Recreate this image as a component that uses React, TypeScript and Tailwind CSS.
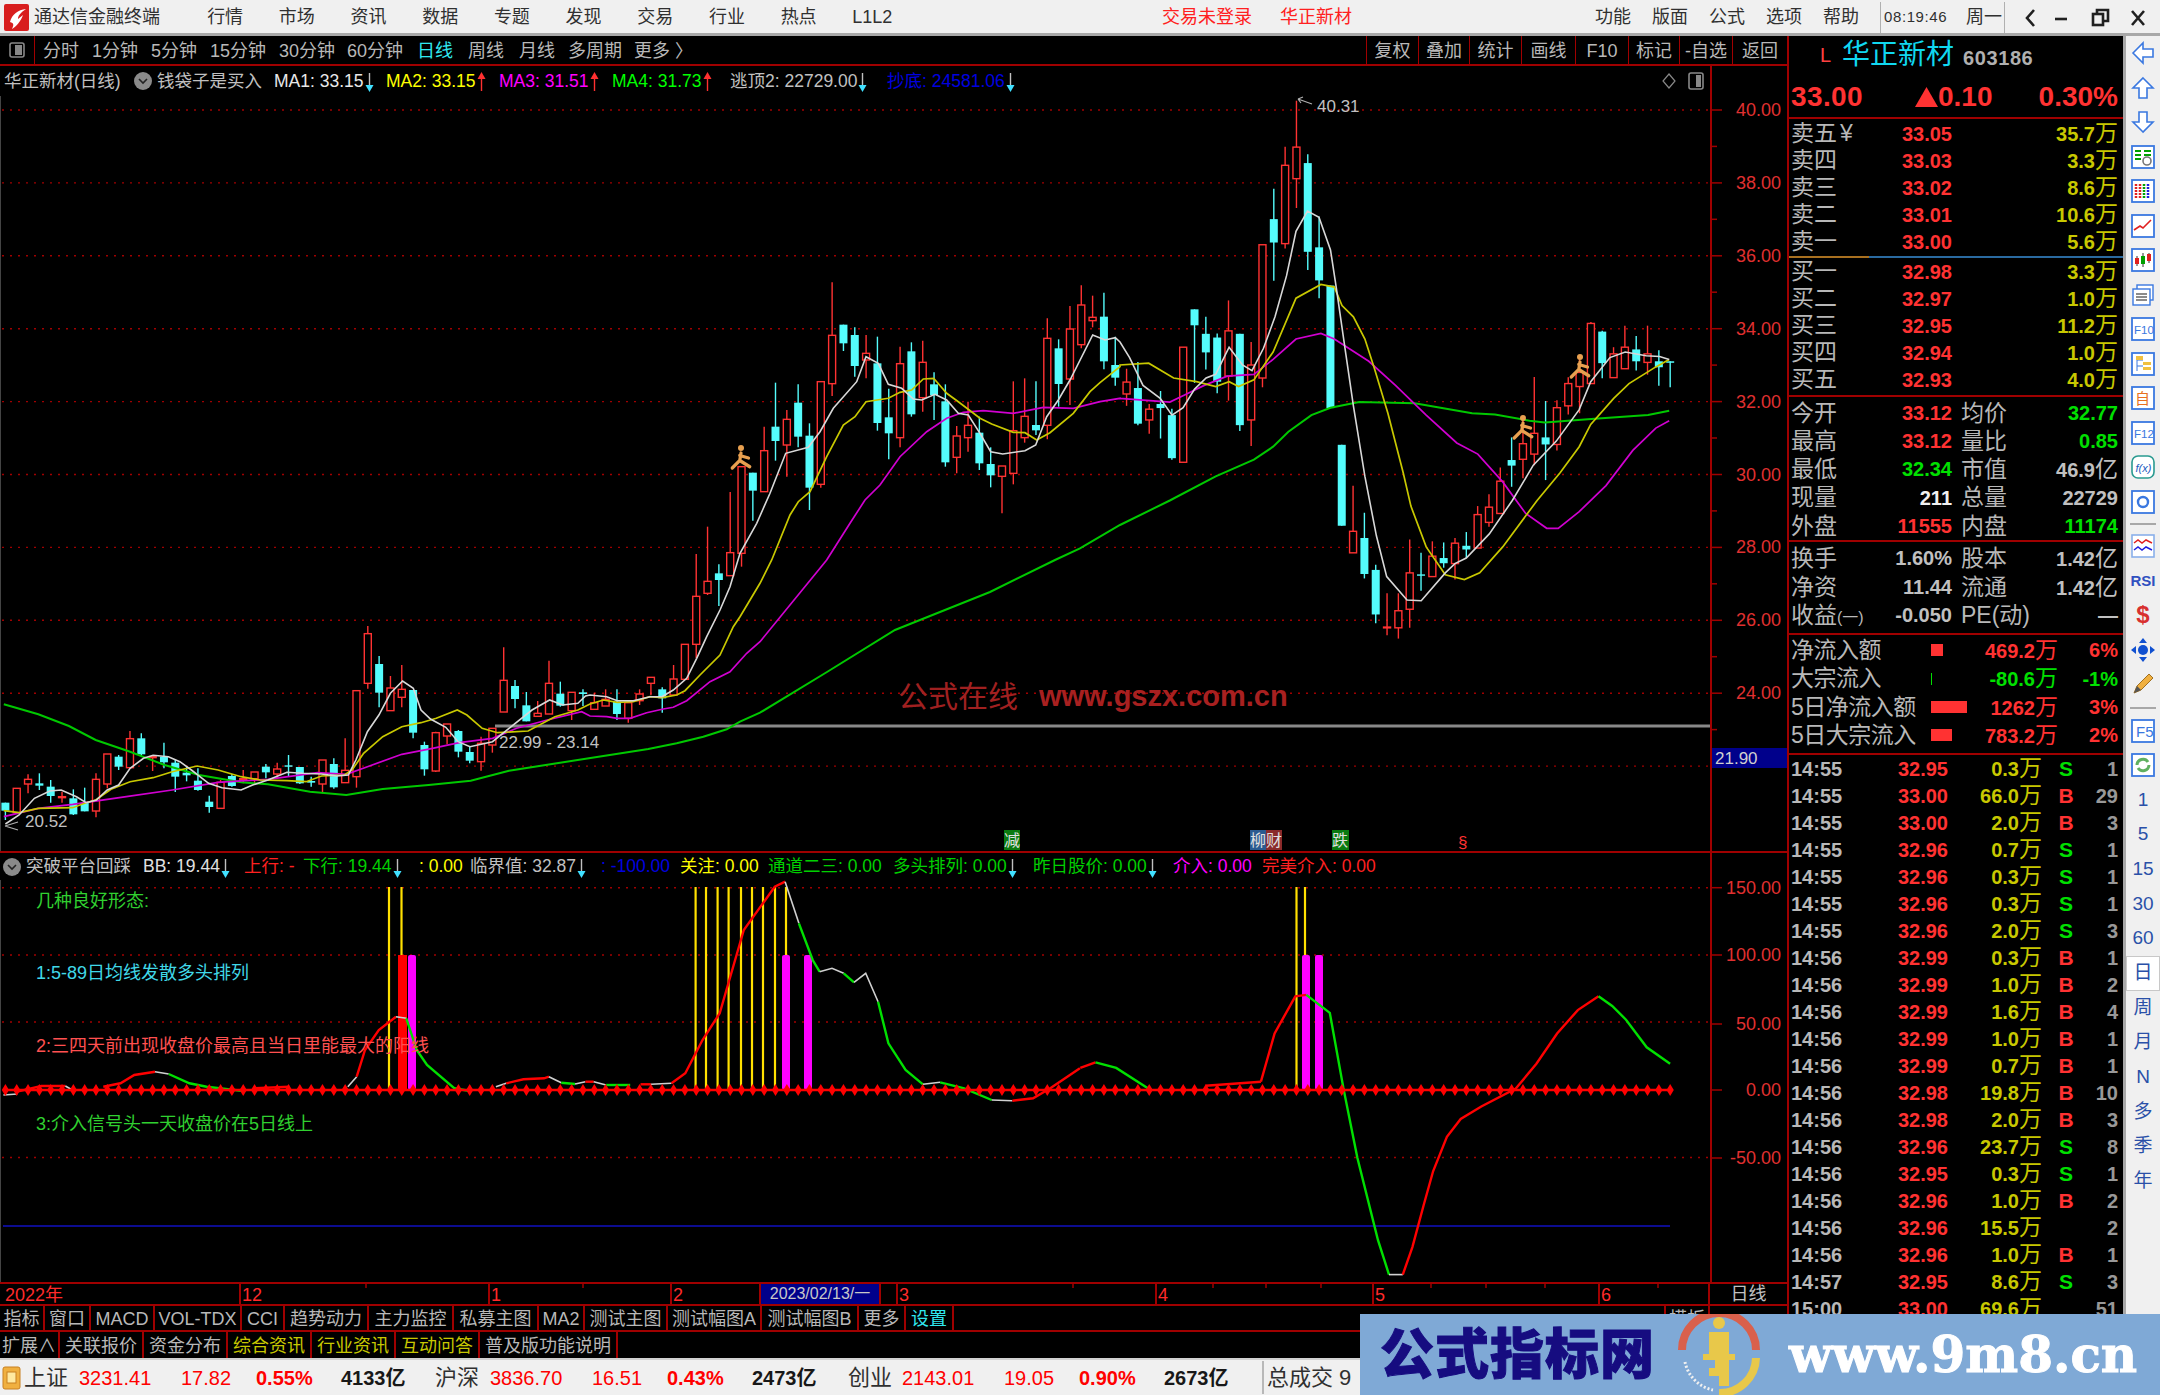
import type { ReactNode } from 'react'

// zoomed reference crops -> page pixels
type Region = [number, number, number, number]
const A: Region = [0, 2.613, 620, 3]
const B: Region = [600, 3, 240, 3]
const C: Region = [1120, 2.613, 79.19, 2.694]
const D: Region = [590, 3, 530, 3]
const E: Region = [0, 1.452, 820, 3]
const F: Region = [0, 0.7257, 0, 0.7257]

const px = (r: Region, x: number) => r[0] + x / r[1]
const py = (r: Region, y: number) => r[2] + y / r[3]
const pts = (r: Region, flat: number[]) => {
  let out = ''
  for (let i = 0; i < flat.length; i += 2) out += `${px(r, flat[i]).toFixed(1)},${py(r, flat[i + 1]).toFixed(1)} `
  return out
}

// up, bodyTop, bodyBottom, wickTop, wickBottom
const candlesA = [
  [0,548,572,548,600],[1,505,578,505,578],[1,478,492,463,520],[0,490,497,460,510],[0,500,528,480,548],[1,530,533,515,548],[0,535,583,508,585],[0,548,574,503,574],[1,478,573,460,592],[1,402,492,402,505],
  [0,410,440,405,450],[1,356,443,333,445],[0,355,403,340,408],[1,410,413,405,453],[0,410,427,368,445],[0,428,470,420,516],[0,458,466,440,484],[0,482,510,445,512],[0,545,561,527,578],[1,487,565,480,565],
  [0,468,498,462,500],[1,476,480,450,490],[1,456,476,456,495],[0,440,457,432,475],[1,447,462,428,475],[0,436,439,405,470],[0,441,490,441,492],[0,483,488,470,500],[1,420,492,420,520],[0,432,502,415,506],
  [1,451,488,355,488],[1,212,470,212,503],[1,41,190,18,206],[0,132,218,108,262],[1,204,272,168,272],[1,208,232,135,262],[0,210,338,210,355],[0,375,448,365,467],[1,338,453,335,456],[1,312,348,312,373],
  [0,333,395,330,412],[0,396,422,378,430],[1,370,425,350,452],[1,325,375,325,398],[1,181,276,82,276],[0,198,237,180,265],[0,256,304,216,304],[1,280,289,243,289],[1,190,282,122,282],[0,221,257,185,260],
  [1,217,272,217,300],[0,217,222,208,258],
]
const candlesD = [
  [1,518,538,488,538],[1,508,528,478,528],[0,515,552,478,570],[1,518,565,510,578],[1,492,512,478,525],[1,442,460,442,495],[0,478,505,472,548],[1,447,495,405,495],[1,343,448,343,448],[1,199,343,72,385],
  [1,154,190,-10,195],[0,130,150,103,228],[1,68,137,-114,137],
]
const candlesB = [
  [1,680,940,680,980],[0,698,752,698,842],[1,632,755,560,755],[0,560,603,428,662],[1,538,615,510,710],[0,488,590,433,622],[0,587,743,550,810],[1,425,733,425,743],[1,286,431,127,468],[0,254,310,254,333],
  [0,285,378,262,410],[1,340,360,285,415],[0,370,549,290,572],[0,532,580,446,658],[1,371,593,320,622],[0,334,523,307,530],[1,367,473,302,515],[0,433,465,397,540],[0,484,667,433,680],[1,588,652,558,700],
  [1,556,593,485,635],[0,578,670,530,690],[0,672,706,622,742],[1,678,709,678,820],[1,572,700,424,733],[1,529,593,415,608],[0,555,571,424,585],[1,295,556,235,598],[0,325,432,298,500],[1,267,417,198,495],
  [1,195,314,136,325],[1,232,242,167,262],[0,230,364,158,388],[0,375,413,290,437],
]
const candlesC = [
  [1,816,848,780,880],[0,832,928,762,932],[1,889,918,875,955],[0,875,886,840,968],[0,905,1021,888,1025],[1,722,1032,722,1032],[0,620,663,620,818],[0,686,736,640,782],[0,696,815,685,846],[1,678,800,596,866],
  [0,686,932,686,948],[1,770,918,708,988],[1,446,805,446,830],[0,377,440,295,543],[1,232,443,182,456],[1,183,268,58,347],[0,226,465,202,514],[0,453,542,370,590],[0,556,886,556,886],[0,985,1203,985,1203],
  [1,1218,1276,1095,1276],[0,1236,1333,1168,1345],[0,1322,1442,1308,1466],[1,1476,1478,1385,1498],[1,1432,1478,1385,1507],[1,1330,1428,1240,1478],[0,1334,1337,1276,1378],[1,1285,1340,1245,1340],[0,1290,1304,1248,1316],[1,1250,1305,1236,1348],
  [0,1257,1267,1220,1290],[1,1173,1263,1150,1263],[1,1153,1194,1118,1206],[1,1083,1170,1046,1170],[0,1026,1041,965,1098],[1,982,1024,915,1075],[1,954,1010,802,1040],[0,965,984,867,1080],[1,885,984,865,1000],[1,820,880,803,903],
  [1,790,828,745,900],[1,658,820,654,820],[0,680,765,678,806],[1,740,804,722,804],[1,722,780,664,780],[0,728,760,692,785],[1,740,763,664,796],[0,760,776,730,826],[0,760,764,760,830],
]

const candleX = (i: number) => 5.4 + 11.325 * i
const allCandles = [
  ...candlesA.map((c) => ({ c, r: A })),
  ...candlesD.map((c) => ({ c, r: D })),
  ...candlesB.map((c) => ({ c, r: B })),
  ...candlesC.map((c) => ({ c, r: C })),
]

const ma1 =
  pts(A, [14,612,50,585,90,535,130,513,160,510,200,530,225,548,252,540,280,510,310,495,340,445,375,415,400,406,440,410,470,425,500,450,545,490,580,503,630,510,660,495,700,480,750,457,790,460,840,462,880,468,910,465,930,420,960,335,990,285,1020,220,1052,183,1080,205,1100,270,1125,297,1165,322,1197,365,1228,380,1287,365,1330,325,1390,270,1436,240,1470,255,1510,250,1530,228]) +
  pts(D, [0,495,50,500,82,512,130,512,180,500,216,500,250,480,290,445,320,385,350,320,390,240,420,170,450,70]) +
  pts(B, [470,850,510,760,557,640,625,622,660,575,700,505,770,425,798,350,835,370,865,433,905,445,940,477,965,480,1005,463,1040,480,1075,520,1105,525,1140,580,1172,635,1208,642,1275,632,1307,615,1340,530,1375,480,1410,420,1478,285,1515,300,1546,293]) +
  pts(C, [0,708,25,750,60,825,105,860,136,905,165,885,195,835,225,805,250,795,285,722,320,770,345,785,375,725,405,640,435,530,460,410,490,355,520,372,550,460,565,560,590,740,610,880,640,1070,670,1230,697,1340,750,1403,787,1405,850,1330,875,1305,905,1290,965,1225,1025,1135,1080,1040,1140,975,1200,890,1230,815,1280,750,1320,735,1375,745,1410,747,1435,755])

const ma2 =
  pts(A, [10,572,50,578,100,565,190,563,225,548,250,540,290,508,340,485,400,473,450,455,515,438,570,450,630,470,680,480,750,482,800,485,840,468,900,465,920,450,950,400,1000,350,1050,320,1100,308,1140,295,1195,270,1220,285,1260,325,1300,338,1380,333,1450,290,1510,270]) +
  pts(D, [0,522,40,510,82,517,130,515,180,500,216,503,260,495,285,482,330,435,390,375,430,290,450,260,510,160]) +
  pts(B, [515,960,570,825,595,785,630,755,680,650,730,555,765,530,798,485,865,475,900,457,935,450,970,417,1001,415,1040,460,1075,485,1140,535,1175,552,1240,577,1275,578,1310,600,1350,578,1420,520,1470,455,1500,428,1560,380]) +
  pts(C, [0,770,75,765,140,805,200,815,250,828,285,815,310,828,350,810,400,735,460,590,525,553,560,560,580,610,610,640,640,700,665,780,700,900,740,1060,760,1150,800,1260,850,1335,900,1348,940,1330,1000,1260,1090,1135,1150,1060,1200,990,1230,930,1290,860,1330,820,1400,775,1435,755])

const ma3 =
  pts(A, [10,590,100,565,190,553,330,530,450,510,570,487,640,482,700,478,830,458,905,463,960,440,1050,403,1130,385,1200,368,1287,355,1350,325,1430,300,1520,275]) +
  pts(D, [0,558,50,560,82,565,120,565,170,548,220,537,250,532,290,512,360,455,420,425,470,370,510,335]) +
  pts(B, [680,960,750,850,795,780,840,735,900,650,980,575,1040,535,1090,517,1150,512,1240,520,1330,502,1420,505,1500,485,1560,475]) +
  pts(C, [0,860,130,870,170,850,220,825,280,800,350,795,400,755,460,700,525,685,560,700,650,760,720,825,800,905,880,980,935,1010,1000,1085,1060,1170,1115,1210,1145,1210,1200,1165,1270,1095,1340,1000,1400,940,1435,920])

const ma4 =
  pts(A, [10,253,100,283,180,318,250,360,340,395,430,435,520,465,630,487,700,493,810,515,905,525,1000,507,1120,495,1230,482,1330,452]) +
  pts(D, [175,657,260,640,340,620,410,598,450,575,510,548]) +
  '827,672 895,630 990,592 ' +
  pts(B, [1365,960,1440,925,1560,855]) +
  pts(C, [130,1135,250,1070,350,1025,400,990,440,950,500,905,550,885,625,870,770,873,920,900,980,903,1070,920,1110,925,1240,915,1380,905,1435,893])

// indicator curve, one polyline per colour run
const RED = '#ff0000'
const GRN = '#00e000'
const WHT = '#d0d0d0'
const curve: [string, Region, number[]][] = [
  [WHT, E, [5,825,25,822]],
  [RED, E, [25,815,60,798,95,798]],
  [WHT, E, [95,798,105,810]],
  [RED, E, [150,800,175,790,195,765,225,755]],
  [WHT, E, [225,755,245,762]],
  [GRN, E, [245,762,275,790,300,800,350,812]],
  [RED, E, [370,805,420,800]],
  [WHT, E, [505,800,518,770]],
  [RED, E, [518,770,530,690,550,630,575,590]],
  [WHT, E, [575,590,590,595]],
  [GRN, E, [590,595,605,690,620,735,660,805,680,812]],
  [WHT, E, [720,800,735,790]],
  [RED, E, [735,790,760,778,790,775,797,770]],
  [WHT, E, [797,770,815,788]],
  [GRN, E, [815,788,835,792]],
  [WHT, E, [835,792,850,785]],
  [RED, E, [850,785,862,785]],
  [WHT, E, [862,785,880,795]],
  [GRN, E, [880,795,915,795]],
  [RED, E, [930,793,945,793]],
  [WHT, E, [945,793,975,790]],
  [RED, E, [975,790,995,760,1020,660,1045,580,1080,330,1125,200,1140,185]],
  [WHT, E, [1140,185,1160,310]],
  [GRN, E, [1160,310,1180,420,1190,455]],
  [WHT, E, [1190,455,1208,445,1225,460]],
  [GRN, E, [1225,460,1240,487]],
  [WHT, E, [1240,487,1257,460,1275,545]],
  [GRN, E, [1275,545,1290,670,1315,750,1340,793]],
  [WHT, E, [1340,793,1365,787]],
  [GRN, E, [1365,787,1400,805,1440,840]],
  [WHT, E, [1440,840,1470,842]],
  [RED, E, [1470,842,1500,835,1525,805,1568,745]],
  [RED, F, [784,775,795,771]],
  [GRN, F, [795,771,810,775,835,791]],
  [RED, F, [875,788,915,785]],
  [RED, F, [915,785,925,750,940,723,948,722]],
  [GRN, F, [948,722,965,735,975,790,985,840,1000,900,1008,925]],
  [WHT, F, [1008,925,1018,925]],
  [RED, F, [1018,925,1025,905,1033,875,1040,850,1050,825,1060,812,1075,803,1100,790,1115,772,1130,750,1145,733,1160,723]],
  [GRN, F, [1160,723,1170,730,1180,740,1195,760,1212,772]],
]

const yellowBars = [389, 401.5, 695.6, 706, 717.6, 728.6, 741, 752, 763, 775, 786, 1296.5, 1305]
const pinkBars = [412, 786, 808, 1306, 1319]

const priceTicks = [40, 38, 36, 34, 32, 30, 28, 26, 24]
const priceY = (p: number) => 110 + (40 - p) * 36.45
const indY = [887.7, 955, 1022, 1157.5]
const indLabels: [string, number][] = [['150.00', 887.7], ['100.00', 955], ['50.00', 1024], ['0.00', 1090], ['-50.00', 1158]]
const axisTicks = [366, 583, 1073, 1213, 1266, 1321, 1431, 1486, 1545, 1658]

const DARK = '#a00000'

function Runner({ x, y }: { x: number; y: number }) {
  return (
    <g transform={`translate(${x} ${y}) scale(1.25)`} stroke="#e8a050" fill="none" strokeWidth="2.6" strokeLinecap="round">
      <circle cx="0" cy="-8" r="2.4" fill="#e8a050" strokeWidth="0" />
      <path d="M0 -4 L-1 2 L-7 8 M-1 2 L7 7 M-1 -2 L6 0" />
    </g>
  )
}

function MainChart() {
  return (
    <svg width="1787" height="755" viewBox="0 96 1787 755" className="block shrink-0">
      <line x1="0.5" x2="0.5" y1="96" y2="851" stroke="#444" />
      {[...priceTicks, 22].map((p) => (
        <line key={p} x1="2" x2="1711" y1={priceY(p)} y2={priceY(p)} stroke={DARK} strokeWidth="1.4" strokeDasharray="2 6" />
      ))}
      <line x1="495" x2="1711" y1="726" y2="726" stroke="#888" strokeWidth="3" />
      {allCandles.map(({ c, r }, i) => {
        const x = candleX(i)
        const col = c[0] ? '#ff3232' : '#54fcfc'
        const top = py(r, c[1])
        const bot = py(r, c[2])
        return (
          <g key={i}>
            <line x1={x} x2={x} y1={py(r, c[3])} y2={py(r, c[4])} stroke={col} strokeWidth="1.4" />
            {c[0] ? (
              <rect x={x - 3.5} y={top} width="7" height={Math.max(bot - top, 0.8)} fill="#000" stroke={col} strokeWidth="1.4" />
            ) : (
              <rect x={x - 4} y={top} width="8" height={Math.max(bot - top, 1.4)} fill={col} />
            )}
          </g>
        )
      })}
      <polyline points={ma4} fill="none" stroke="#00c800" strokeWidth="2" />
      <polyline points={ma3} fill="none" stroke="#d000d0" strokeWidth="1.7" />
      <polyline points={ma2} fill="none" stroke="#c8c800" strokeWidth="1.7" />
      <polyline points={ma1} fill="none" stroke="#d8d8d8" strokeWidth="1.6" />
      <Runner x={741} y={458} />
      <Runner x={1523} y={428} />
      <Runner x={1580} y={367} />

      <path d="M1298 99 L1312 104 M1298 99 L1303 97 M1298 99 L1301 103" stroke="#b0b0b0" fill="none" strokeWidth="1.2" />
      <text x="1317" y="112" fontSize="17" fill="#c0c0c0">40.31</text>
      <text x="499" y="748" fontSize="17" fill="#c0c0c0">22.99 - 23.14</text>
      <path d="M5 826 L18 822 M5 826 L18 830" stroke="#b0b0b0" fill="none" strokeWidth="1.2" />
      <text x="25" y="827" fontSize="17" fill="#c0c0c0">20.52</text>

      <text x="898" y="707" fontSize="30" fill="#a02020">公式在线</text>
      <text x="1039" y="706" fontSize="29" fill="#a82020" fontWeight="700">www.gszx.com.cn</text>

      <rect x="1004" y="830" width="16" height="20" fill="#0a7a10" />
      <text x="1004" y="846" fontSize="16" fill="#e0e0e0">减</text>
      <rect x="1250" y="830" width="16" height="20" fill="#2a5a90" />
      <rect x="1266" y="830" width="16" height="20" fill="#8a2a2a" />
      <text x="1250" y="846" fontSize="16" fill="#e0e0e0">柳财</text>
      <rect x="1332" y="830" width="17" height="20" fill="#0a7a10" />
      <text x="1332" y="846" fontSize="16" fill="#e0e0e0">跌</text>
      <text x="1458" y="848" fontSize="17" fill="#ff3232">§</text>

      <line x1="1711" x2="1711" y1="96" y2="851" stroke={DARK} strokeWidth="2" />
      {priceTicks.map((p) => (
        <g key={p}>
          <line x1="1711" x2="1722" y1={priceY(p)} y2={priceY(p)} stroke={DARK} strokeWidth="1.5" />
          <line x1="1711" x2="1717" y1={priceY(p) + 36.4} y2={priceY(p) + 36.4} stroke={DARK} strokeWidth="1.5" />
          <text x="1781" y={priceY(p) + 6} fontSize="18" fill="#e03030" textAnchor="end">{p}.00</text>
        </g>
      ))}
      <rect x="1712" y="748" width="75" height="20" fill="#00008b" />
      <text x="1715" y="764" fontSize="17" fill="#d0d0d0">21.90</text>
    </svg>
  )
}

function IndicatorChart() {
  return (
    <svg width="1787" height="402" viewBox="0 880 1787 402" className="block shrink-0">
      <line x1="0.5" x2="0.5" y1="880" y2="1282" stroke="#444" />
      {indY.map((y) => (
        <line key={y} x1="2" x2="1711" y1={y} y2={y} stroke={DARK} strokeWidth="1.4" strokeDasharray="2 6" />
      ))}
      <line x1="3" x2="1670" y1="1226" y2="1226" stroke="#1010c0" strokeWidth="1.5" />
      {yellowBars.map((x) => (
        <line key={x} x1={x} x2={x} y1="887" y2="1090" stroke="#ffe000" strokeWidth="2.2" />
      ))}
      <rect x="398" y="955" width="9" height="135" fill="#ff0000" />
      {pinkBars.map((x) => (
        <rect key={x} x={x - 4} y="955" width="8" height="135" rx="2" fill="#ff00ff" />
      ))}
      {curve.map(([col, r, flat], i) => (
        <polyline key={i} points={pts(r, flat)} fill="none" stroke={col} strokeWidth={col === WHT ? 1.6 : 2.4} />
      ))}
      <line x1="3" x2="1672" y1="1090" y2="1090" stroke="#ff0000" strokeWidth="2.5" />
      {allCandles.map((_, i) => {
        const x = candleX(i)
        return <path key={i} d={`M${x} 1084 L${x + 3.6} 1090 L${x} 1096 L${x - 3.6} 1090 Z`} fill="#ff0000" />
      })}

      <text x="36" y="907" fontSize="18" fill="#30d030">几种良好形态:</text>
      <text x="36" y="979" fontSize="18" fill="#40d8e8">1:5-89日均线发散多头排列</text>
      <text x="36" y="1052" fontSize="18" fill="#ff5050">2:三四天前出现收盘价最高且当日里能最大的阳线</text>
      <text x="36" y="1130" fontSize="18" fill="#30d030">3:介入信号头一天收盘价在5日线上</text>

      <line x1="1711" x2="1711" y1="880" y2="1282" stroke={DARK} strokeWidth="2" />
      {indLabels.map(([t, y]) => (
        <g key={t}>
          <line x1="1711" x2="1722" y1={y} y2={y} stroke={DARK} strokeWidth="1.5" />
          <text x="1781" y={y + 6} fontSize="18" fill="#e03030" textAnchor="end">{t}</text>
        </g>
      ))}
    </svg>
  )
}

function Chevron() {
  return (
    <span className="w-[18px] h-[18px] rounded-full bg-[#8a8a8a] flex items-center justify-center shrink-0">
      <svg width="10" height="8" viewBox="0 0 10 8"><path d="M1 2 L5 6 L9 2" stroke="#222" strokeWidth="1.6" fill="none" /></svg>
    </span>
  )
}

const Down = () => (
  <svg width="9" height="20" viewBox="0 0 9 20" className="inline-block align-middle ml-[1px]">
    <path d="M4.5 1 V15" stroke="#c0c0c0" strokeWidth="1.4" />
    <path d="M0.5 13 H8.5 L4.5 20 Z" fill="#40e0ff" />
  </svg>
)
const Up = () => (
  <svg width="9" height="20" viewBox="0 0 9 20" className="inline-block align-middle ml-[1px]">
    <path d="M4.5 5 V19" stroke="#ff3030" strokeWidth="1.4" />
    <path d="M0.5 7 H8.5 L4.5 0 Z" fill="#ff3030" />
  </svg>
)

function TitleBar() {
  const menus = ['行情', '市场', '资讯', '数据', '专题', '发现', '交易', '行业', '热点', 'L1L2']
  const right = ['功能', '版面', '公式', '选项', '帮助']
  return (
    <div className="h-[36px] shrink-0 bg-[#f0f0f0] border-b-[3px] border-[#a8a8a8] flex items-center pt-[2px] text-[18px] text-[#303030]">
      <svg width="30" height="28" viewBox="0 0 30 28" className="ml-[3px] shrink-0">
        <rect x="1" y="0" width="25" height="27" rx="2" fill="#d81e1e" />
        <path d="M7 18 C9 10 15 6 23 5 C17 9 15 12 15 15 L20 11 C18 17 13 23 9 25 C11 21 11 19 7 18 Z" fill="#fff" />
      </svg>
      <span className="w-[174px] ml-[1px]">通达信金融终端</span>
      {menus.map((m) => (
        <span key={m} className="w-[71.7px] shrink-0">{m}</span>
      ))}
      <div className="w-[238px] shrink-0" />
      <span className="text-[#ff2020] w-[118px] shrink-0">交易未登录</span>
      <span className="text-[#ff2020] w-[315px] shrink-0">华正新材</span>
      {right.map((m) => (
        <span key={m} className="w-[57px] shrink-0">{m}</span>
      ))}
      <div className="h-full border-l border-[#b0b0b0] flex items-center pl-[3px] w-[124px] shrink-0">
        <span className="text-[15px] tracking-[0.6px] w-[82px]">08:19:46</span>
        <span>周一</span>
      </div>
      <div className="h-full border-l border-[#b0b0b0] flex items-center shrink-0">
        <svg width="155" height="24" viewBox="0 0 155 24" stroke="#202020" strokeWidth="2.6" fill="none">
          <path d="M29 4 L22 12 L29 20" />
          <path d="M50 13 H62" />
          <rect x="88" y="8" width="10" height="11" />
          <path d="M92 8 V4 H103 V15 H98" />
          <path d="M127 5 L139 19 M139 5 L127 19" />
        </svg>
      </div>
    </div>
  )
}

function ToolRow() {
  const periods = [
    ['分时', 'w-[49px]'], ['1分钟', 'w-[59px]'], ['5分钟', 'w-[59px]'], ['15分钟', 'w-[69px]'], ['30分钟', 'w-[68px]'], ['60分钟', 'w-[70px]'],
    ['日线', 'w-[51px] text-[#30e8f0]'], ['周线', 'w-[51px]'], ['月线', 'w-[49px]'], ['多周期', 'w-[66px]'], ['更多 〉', 'w-[70px]'],
  ]
  const buttons = [
    ['复权', 'w-[52px]'], ['叠加', 'w-[51px]'], ['统计', 'w-[52px]'], ['画线', 'w-[54px]'], ['F10', 'w-[53px]'], ['标记', 'w-[51px]'], ['-自选', 'w-[53px]'], ['返回', 'w-[55px]'],
  ]
  return (
    <div className="h-[30px] shrink-0 flex items-center border-b-2 border-[#a00000] text-[18px] text-[#b8b8b8]">
      <div className="w-[35px] h-full border-r border-[#a00000] flex items-center justify-center shrink-0 mr-[8px]">
        <svg width="18" height="18" viewBox="0 0 18 18"><rect x="2" y="2" width="14" height="14" rx="2" fill="none" stroke="#888" strokeWidth="1.6" /><rect x="7" y="4" width="7" height="10" fill="#888" /></svg>
      </div>
      {periods.map(([t, c]) => (
        <span key={t} className={`${c} shrink-0 whitespace-nowrap pt-[3px]`}>{t}</span>
      ))}
      <div className="ml-auto flex h-full">
        {buttons.map(([t, c]) => (
          <span key={t} className={`${c} border-l border-[#a00000] flex items-center justify-center pt-[2px]`}>{t}</span>
        ))}
      </div>
    </div>
  )
}

function InfoRow() {
  return (
    <div className="h-[30px] shrink-0 flex items-center text-[17.5px] whitespace-nowrap relative">
      <span className="w-[134px] pl-[4px] shrink-0 text-[#c0c0c0]">华正新材(日线)</span>
      <span className="w-[23px] shrink-0"><Chevron /></span>
      <span className="w-[117px] shrink-0 text-[#c0c0c0]">钱袋子是买入</span>
      <span className="w-[112px] shrink-0 text-[#e8e8e8]">MA1: 33.15<Down /></span>
      <span className="w-[113px] shrink-0 text-[#ffff00]">MA2: 33.15<Up /></span>
      <span className="w-[113px] shrink-0 text-[#ff00ff]">MA3: 31.51<Up /></span>
      <span className="w-[118px] shrink-0 text-[#00ff00]">MA4: 31.73<Up /></span>
      <span className="w-[157px] shrink-0 text-[#c0c0c0]">逃顶2: 22729.00<Down /></span>
      <span className="w-[118px] shrink-0 text-[#0000e0]">抄底: 24581.06<Down /></span>
      {/* 2 px wide rule shared with the chart below */}
      <div className="absolute left-[1710px] top-0 bottom-0 w-[2px] bg-[#a00000]" />
      <svg width="14" height="18" viewBox="0 0 14 18" className="absolute left-[1662px] top-[6px]"><path d="M7 2 L13 9 L7 16 L1 9 Z" stroke="#888" fill="none" strokeWidth="1.2" /></svg>
      <svg width="18" height="18" viewBox="0 0 18 18" className="absolute left-[1687px] top-[6px]"><rect x="2" y="1" width="14" height="16" rx="2" fill="none" stroke="#888" strokeWidth="1.6" /><rect x="9" y="3" width="5" height="12" fill="#888" /></svg>
    </div>
  )
}

function IndicatorTitle() {
  return (
    <div className="h-[27px] shrink-0 flex items-center text-[17.5px] whitespace-nowrap relative">
      <span className="w-[26px] pl-[3px] shrink-0"><Chevron /></span>
      <span className="w-[117px] shrink-0 text-[#c0c0c0]">突破平台回踩</span>
      <span className="w-[101px] shrink-0 text-[#e0e0e0]">BB: 19.44<Down /></span>
      <span className="w-[59px] shrink-0 text-[#ff2020]">上行: -</span>
      <span className="w-[116px] shrink-0 text-[#00d000]">下行: 19.44<Down /></span>
      <span className="w-[51px] shrink-0 text-[#ffff00]">: 0.00</span>
      <span className="w-[131px] shrink-0 text-[#c0c0c0]">临界值: 32.87<Down /></span>
      <span className="w-[79px] shrink-0 text-[#0000e0]">: -100.00</span>
      <span className="w-[88px] shrink-0 text-[#ffff00]">关注: 0.00</span>
      <span className="w-[125px] shrink-0 text-[#00d000]">通道二三: 0.00</span>
      <span className="w-[140px] shrink-0 text-[#00d000]">多头排列: 0.00<Down /></span>
      <span className="w-[140px] shrink-0 text-[#00d000]">昨日股价: 0.00<Down /></span>
      <span className="w-[89px] shrink-0 text-[#ff00ff]">介入: 0.00</span>
      <span className="shrink-0 text-[#ff2020]">完美介入: 0.00</span>
      <div className="absolute left-[1710px] top-0 bottom-0 w-[2px] bg-[#a00000]" />
    </div>
  )
}

function TimeAxis() {
  const cell = 'h-full shrink-0 border-r-2 border-[#a00000] pl-[1px] pt-[2px] flex items-center'
  return (
    <div className="relative h-[24px] shrink-0 flex text-[18px] text-[#ff2a2a] border-t-2 border-b-2 border-[#a00000]">
      <span className={`${cell} w-[241px] pl-[5px]`}>2022年</span>
      <span className={`${cell} w-[249px]`}>12</span>
      <span className={`${cell} w-[182px]`}>1</span>
      <span className={`${cell} w-[89px]`}>2</span>
      <span className="h-full w-[118px] shrink-0 bg-[#00008b] text-[#c8c8c8] text-[16px] flex items-center justify-center">2023/02/13/一</span>
      <span className={`${cell} w-[19px] border-l-2`} />
      <span className={`${cell} w-[259px]`}>3</span>
      <span className={`${cell} w-[217px]`}>4</span>
      <span className={`${cell} w-[226px]`}>5</span>
      <span className={`${cell} w-[110px]`}>6</span>
      <span className="flex-1 text-center text-[#c0c0c0] flex items-center justify-center">日线</span>
      <svg width="1711" height="4" className="absolute left-0 top-0">
        {axisTicks.map((x) => (
          <line key={x} x1={x} x2={x} y1="0" y2="4" stroke={DARK} strokeWidth="1.5" />
        ))}
      </svg>
    </div>
  )
}

function TabRows() {
  const row1 = [
    ['指标', 'w-[45px]'], ['窗口', 'w-[46px]'], ['MACD', 'w-[64px]'], ['VOL-TDX', 'w-[87px]'], ['CCI', 'w-[43px]'], ['趋势动力', 'w-[84px]'], ['主力监控', 'w-[85px]'], ['私募主图', 'w-[85px]'],
    ['MA2', 'w-[46px]'], ['测试主图', 'w-[83px]'], ['测试幅图A', 'w-[94px]'], ['测试幅图B', 'w-[97px]'], ['更多', 'w-[47px]'], ['设置', 'w-[48px] text-[#30e8f0]'],
  ]
  const row2 = [
    ['扩展∧', 'w-[60px]'], ['关联报价', 'w-[84px]'], ['资金分布', 'w-[84px]'], ['综合资讯', 'w-[84px] text-[#c8c800]'], ['行业资讯', 'w-[84px] text-[#c8c800]'], ['互动问答', 'w-[84px] text-[#c8c800]'], ['普及版功能说明', 'w-[138px]'],
  ]
  const cell = 'h-full shrink-0 border-r-2 border-[#a00000] flex items-center justify-center whitespace-nowrap pt-[2px]'
  return (
    <div className="text-[#b8b8b8] text-[18px] shrink-0">
      <div className="h-[26px] flex border-b-2 border-[#a00000]">
        {row1.map(([t, c]) => (
          <span key={t} className={`${cell} ${c}`}>{t}</span>
        ))}
        <span className={`${cell} w-[46px] border-l-2 ml-[710px]`}>模板</span>
      </div>
      <div className="h-[26px] flex">
        {row2.map(([t, c]) => (
          <span key={t} className={`${cell} ${c}`}>{t}</span>
        ))}
      </div>
    </div>
  )
}

const N = 'font-bold text-[20px]'
const R = 'text-[#ff3232]'
const Y = 'text-[#c8c800]'
const Gn = 'text-[#00e000]'
const Gy = 'text-[#c0c0c0]'

function Row({ label, price, value, h = 'h-[27px]', valueCls = Y, priceCls = R, extra }: { label: ReactNode; price: string; value: ReactNode; h?: string; valueCls?: string; priceCls?: string; extra?: string }) {
  return (
    <div className={`${h} flex items-center pl-[2px] pr-[5px] whitespace-nowrap`}>
      <span className="w-[102px] shrink-0 text-[#b8b8b8] text-[23px]">{label}</span>
      <span className={`w-[59px] shrink-0 text-right ${N} ${priceCls}`}>{price}</span>
      {extra && <span className="ml-[9px] text-[#b8b8b8] text-[23px]">{extra}</span>}
      <span className={`ml-auto text-right ${N} ${valueCls}`}>{value}</span>
    </div>
  )
}

const WanBig = ({ v }: { v: string }) => (
  <span>{v}<span className="font-normal text-[23px]">万</span></span>
)
const Yi = ({ v }: { v: string }) => (
  <span>{v}<span className="font-normal text-[23px]">亿</span></span>
)

const sells = [['卖五', '33.05', '35.7'], ['卖四', '33.03', '3.3'], ['卖三', '33.02', '8.6'], ['卖二', '33.01', '10.6'], ['卖一', '33.00', '5.6']]
const buys = [['买一', '32.98', '3.3'], ['买二', '32.97', '1.0'], ['买三', '32.95', '11.2'], ['买四', '32.94', '1.0'], ['买五', '32.93', '4.0']]
const flows = [
  ['净流入额', 'w-[12px]', '469.2', '6%', R],
  ['大宗流入', 'w-[1px]', '-80.6', '-1%', Gn],
  ['5日净流入额', 'w-[36px]', '1262', '3%', R],
  ['5日大宗流入', 'w-[21px]', '783.2', '2%', R],
]
const ticks = [
  ['14:55', '32.95', '0.3', 'S', '1'], ['14:55', '33.00', '66.0', 'B', '29'], ['14:55', '33.00', '2.0', 'B', '3'], ['14:55', '32.96', '0.7', 'S', '1'], ['14:55', '32.96', '0.3', 'S', '1'],
  ['14:55', '32.96', '0.3', 'S', '1'], ['14:55', '32.96', '2.0', 'S', '3'], ['14:56', '32.99', '0.3', 'B', '1'], ['14:56', '32.99', '1.0', 'B', '2'], ['14:56', '32.99', '1.6', 'B', '4'],
  ['14:56', '32.99', '1.0', 'B', '1'], ['14:56', '32.99', '0.7', 'B', '1'], ['14:56', '32.98', '19.8', 'B', '10'], ['14:56', '32.98', '2.0', 'B', '3'], ['14:56', '32.96', '23.7', 'S', '8'],
  ['14:56', '32.95', '0.3', 'S', '1'], ['14:56', '32.96', '1.0', 'B', '2'], ['14:56', '32.96', '15.5', '', '2'], ['14:56', '32.96', '1.0', 'B', '1'], ['14:57', '32.95', '8.6', 'S', '3'],
  ['15:00', '33.00', '69.6', '', '51'],
]

function QuotePanel() {
  return (
    <div className="w-[336px] shrink-0 border-l-2 border-[#a00000] flex flex-col overflow-hidden">
      <div className="h-[83px] shrink-0 border-b-2 border-[#a00000]">
        <div className="h-[38px] flex items-center pl-[31px]">
          <span className="text-[#ff4040] text-[20px] w-[22px]">L</span>
          <span className="text-[#10d8f0] text-[28px] leading-none w-[121px]">华正新材</span>
          <span className="text-[#b0b0b0] font-bold text-[20px] tracking-[0.6px] mt-[6px]">603186</span>
        </div>
        <div className="h-[43px] flex items-center pt-[3px] text-[#ff3232] font-bold text-[28px] pl-[2px] pr-[5px]">
          <span className="w-[124px] tracking-[0.4px]">33.00</span>
          <span className="flex items-center w-[122px]">
            <svg width="23" height="20" viewBox="0 0 23 20"><path d="M11.5 0 L23 20 H0 Z" fill="#ff3232" /></svg>0.10
          </span>
          <span className="ml-auto">0.30%</span>
        </div>
      </div>
      <div className="h-[137px] shrink-0 pt-[1px]">
        {sells.map(([l, p, v], i) => (
          <Row key={l} label={i === 0 ? <>{l}<span className="ml-[3px]">¥</span></> : l} price={p} value={<WanBig v={v} />} />
        ))}
      </div>
      <div className="h-[2px] shrink-0 flex">
        <div className="w-[80px] bg-[#a87020]" />
        <div className="flex-1 bg-[#2a6aa0]" />
      </div>
      <div className="h-[139px] shrink-0 border-b-2 border-[#a00000]">
        {buys.map(([l, p, v]) => (
          <Row key={l} label={l} price={p} value={<WanBig v={v} />} />
        ))}
      </div>
      <div className="h-[145px] shrink-0 pt-[2px] border-b-2 border-[#a00000]">
        <Row h="h-[28.2px]" label="今开" price="33.12" extra="均价" value="32.77" valueCls={Gn} />
        <Row h="h-[28.2px]" label="最高" price="33.12" extra="量比" value="0.85" valueCls={Gn} />
        <Row h="h-[28.2px]" label="最低" price="32.34" priceCls={Gn} extra="市值" value={<Yi v="46.9" />} valueCls={Gy} />
        <Row h="h-[28.2px]" label="现量" price="211" priceCls="text-[#f0f0f0]" extra="总量" value="22729" valueCls={Gy} />
        <Row h="h-[28.2px]" label="外盘" price="11555" extra="内盘" value="11174" valueCls={Gn} />
      </div>
      <div className="h-[93px] shrink-0 pt-[2px] border-b-2 border-[#a00000]">
        <Row h="h-[28.5px]" label="换手" price="1.60%" priceCls={Gy} extra="股本" value={<Yi v="1.42" />} valueCls={Gy} />
        <Row h="h-[28.5px]" label="净资" price="11.44" priceCls={Gy} extra="流通" value={<Yi v="1.42" />} valueCls={Gy} />
        <Row h="h-[28.5px]" label={<>收益<span className="text-[16px]">(一)</span></>} price="-0.050" priceCls={Gy} extra="PE(动)" value="—" valueCls={Gy} />
      </div>
      <div className="h-[120px] shrink-0 pt-[1px] border-b-2 border-[#a00000]">
        {flows.map(([l, w, v, pct, c]) => (
          <div key={l} className="h-[28.4px] flex items-center pl-[2px] pr-[5px] whitespace-nowrap">
            <span className="w-[140px] shrink-0 text-[#b8b8b8] text-[23px] tracking-[-0.5px]">{l}</span>
            <span className="w-[50px] shrink-0"><span className={`block h-[12px] ${w} ${c === R ? 'bg-[#ff3232]' : 'bg-[#00e000]'}`} /></span>
            <span className={`w-[77px] shrink-0 text-right ${N} ${c}`}><WanBig v={v} /></span>
            <span className={`ml-auto ${N} ${c}`}>{pct}</span>
          </div>
        ))}
      </div>
      <div className="flex-1 overflow-hidden">
        {ticks.map((t, i) => (
          <div key={i} className={`h-[27px] flex items-center pl-[2px] pr-[5px] whitespace-nowrap ${N}`}>
            <span className="w-[91px] shrink-0 text-[#b8b8b8]">{t[0]}</span>
            <span className={`w-[66px] shrink-0 text-right ${R}`}>{t[1]}</span>
            <span className={`w-[94px] shrink-0 text-right ${Y}`}><WanBig v={t[2]} /></span>
            <span className={`w-[48px] shrink-0 text-center text-[21px] ${t[3] === 'S' ? Gn : R}`}>{t[3]}</span>
            <span className="ml-auto text-[#989898]">{t[4]}</span>
          </div>
        ))}
      </div>
    </div>
  )
}

const BLUE = '#3a78e0'

function Boxed({ children }: { children: ReactNode }) {
  return (
    <svg width="24" height="24" viewBox="0 0 24 24">
      <rect x="1" y="1" width="22" height="22" fill="#fff" stroke={BLUE} strokeWidth="1.8" />
      {children}
    </svg>
  )
}

const Arrow = ({ rot }: { rot: number }) => (
  <svg width="24" height="24" viewBox="0 0 24 24">
    <path transform={`rotate(${rot} 12 12)`} d="M12 2 L22 12 H16 V22 H8 V12 H2 Z" fill="#fff" stroke={BLUE} strokeWidth="1.6" />
  </svg>
)

const sideIcons: ReactNode[] = [
  <Arrow rot={-90} />,
  <Arrow rot={0} />,
  <Arrow rot={180} />,
  <Boxed><path d="M4 6h6M13 6h7M4 10h6M13 10h7M4 14h6" stroke="#00a000" strokeWidth="2" /><circle cx="16" cy="16" r="4" fill="none" stroke="#777" strokeWidth="1.6" /></Boxed>,
  <Boxed><path d="M5 5v14M9 5v14" stroke="#e02020" strokeWidth="2.5" strokeDasharray="2 1" /><path d="M13 5v14" stroke="#00a000" strokeWidth="2.5" strokeDasharray="2 1" /><path d="M17 5v14" stroke="#2020e0" strokeWidth="2.5" strokeDasharray="2 1" /></Boxed>,
  <Boxed><path d="M3 16 L9 12 L12 14 L20 6" stroke="#e02020" fill="none" strokeWidth="1.6" /></Boxed>,
  <Boxed><path d="M6 8v10M12 5v14M18 5v10" stroke="#333" strokeWidth="1" /><rect x="4" y="10" width="4" height="6" fill="#e02020" /><rect x="10" y="8" width="4" height="8" fill="#00a000" /><rect x="16" y="6" width="4" height="7" fill="#e02020" /></Boxed>,
  <svg width="24" height="24" viewBox="0 0 24 24" fill="#fff" stroke={BLUE} strokeWidth="1.4"><rect x="6" y="2" width="16" height="15" /><rect x="2" y="6" width="17" height="16" /><path d="M5 11h11M5 14h11M5 17h11" stroke="#666" /></svg>,
  <Boxed><text x="3" y="16.5" fontSize="11.5" fill={BLUE} stroke="none">F10</text></Boxed>,
  <Boxed><path d="M6 5v14M6 8h6M6 14h6" stroke={BLUE} /><rect x="5" y="4" width="7" height="4" fill="#f0c040" /><rect x="12" y="10" width="8" height="3" fill="#f0c040" /><rect x="12" y="15" width="8" height="3" fill="#f0c040" /></Boxed>,
  <Boxed><text x="4" y="18" fontSize="15" fill="#e87020" stroke="none">自</text></Boxed>,
  <Boxed><text x="3" y="16.5" fontSize="11.5" fill={BLUE} stroke="none">F12</text></Boxed>,
  <svg width="24" height="24" viewBox="0 0 24 24"><rect x="1" y="1" width="22" height="22" rx="6" fill="#fff" stroke="#2a9a90" strokeWidth="1.6" /><text x="4.5" y="16.5" fontSize="11" fontStyle="italic" fill="#1a5ac0">f(x)</text></svg>,
  <Boxed><circle cx="12" cy="12" r="5" fill="none" stroke={BLUE} strokeWidth="2.4" /></Boxed>,
]
const sideIcons2: ReactNode[] = [
  <svg width="24" height="24" viewBox="0 0 24 24"><rect x="1" y="1" width="22" height="22" fill="#fff" stroke="#8ab0ea" strokeWidth="1.6" /><path d="M3 9 L7 6 L11 9 L15 6 L21 9" stroke="#e02020" fill="none" strokeWidth="1.5" /><path d="M3 16 L7 13 L11 16 L15 13 L21 16" stroke="#2020e0" fill="none" strokeWidth="1.5" /></svg>,
  <span className="text-[15px] font-bold text-[#3050c0]">RSI</span>,
  <span className="text-[24px] leading-none font-bold text-[#d83030]">$</span>,
  <svg width="26" height="26" viewBox="0 0 26 26" fill="#1050d0"><path d="M13 1 L17 6 H9 Z M13 25 L9 20 H17 Z M1 13 L6 9 V17 Z M25 13 L20 17 V9 Z" /><circle cx="13" cy="13" r="5" /></svg>,
  <svg width="26" height="26" viewBox="0 0 26 26"><path d="M4 22 L7 15 L19 3 L23 7 L11 19 Z" fill="#f0b040" stroke="#a07020" /><path d="M4 22 L7 15 L11 19 Z" fill="#555" /></svg>,
]
const sideText = ['1', '5', '15', '30', '60']
const sideText2 = ['周', '月', 'N', '多', '季', '年']

function SideBar() {
  const cell = 'h-[34.5px] shrink-0 flex items-center justify-center'
  const textCell = 'h-[34.7px] shrink-0 flex items-center justify-center'
  return (
    <div className="w-[37px] shrink-0 bg-[#f0f0f0] border-l-[3px] border-[#a8a8a8] flex flex-col text-[19px] text-[#2a50a8]">
      {sideIcons.map((n, i) => (
        <div key={i} className={cell}>{n}</div>
      ))}
      <div className="h-[2px] my-[4px] mx-[4px] bg-[#a8a8a8] shrink-0" />
      {sideIcons2.map((n, i) => (
        <div key={i} className={cell}>{n}</div>
      ))}
      <div className="h-[2px] my-[5px] mx-[4px] bg-[#a8a8a8] shrink-0" />
      <div className={cell}>
        <Boxed><text x="5" y="18" fontSize="15" fill={BLUE}>F5</text></Boxed>
      </div>
      <div className={cell}>
        <Boxed><path d="M6 12 A6 6 0 0 1 17 9 M18 12 A6 6 0 0 1 7 15" stroke="#60b060" fill="none" strokeWidth="3" /></Boxed>
      </div>
      {sideText.map((t) => (
        <div key={t} className={textCell}>{t}</div>
      ))}
      <div className={`${textCell} bg-white border border-[#c8c8c8]`}>日</div>
      {sideText2.map((t) => (
        <div key={t} className={textCell}>{t}</div>
      ))}
    </div>
  )
}

function StatusBar() {
  const items: [string, string][] = [
    ['上证', 'w-[55px] text-[22px] text-[#303030]'], ['3231.41', 'w-[102px] text-[#ff0000]'], ['17.82', 'w-[75px] text-[#ff0000]'], ['0.55%', 'w-[85px] text-[#ff0000] font-bold'], ['4133亿', 'w-[94px] text-[#181818] font-bold'],
    ['沪深', 'w-[55px] text-[22px] text-[#303030]'], ['3836.70', 'w-[102px] text-[#ff0000]'], ['16.51', 'w-[75px] text-[#ff0000]'], ['0.43%', 'w-[85px] text-[#ff0000] font-bold'], ['2473亿', 'w-[96px] text-[#181818] font-bold'],
    ['创业', 'w-[54px] text-[22px] text-[#303030]'], ['2143.01', 'w-[102px] text-[#ff0000]'], ['19.05', 'w-[75px] text-[#ff0000]'], ['0.90%', 'w-[85px] text-[#ff0000] font-bold'], ['2673亿', 'w-[98px] text-[#181818] font-bold'],
  ]
  return (
    <div className="h-[37px] shrink-0 bg-[#f0f0f0] border-t-2 border-[#d0d0d0] flex items-center text-[20px] whitespace-nowrap">
      <svg width="20" height="24" viewBox="0 0 20 24" className="ml-[2px] mr-[2px] shrink-0">
        <rect x="1" y="1" width="17" height="22" rx="2" fill="#f0b040" stroke="#c88020" />
        <rect x="5" y="6" width="9" height="11" fill="#ffe9a0" stroke="#c88020" />
      </svg>
      {items.map(([t, c], i) => (
        <span key={i} className={`${c} shrink-0`}>{t}</span>
      ))}
      <span className="border-l-2 border-[#b8b8b8] pl-[3px] text-[22px] text-[#303030]">总成交 9</span>
    </div>
  )
}

function Watermark() {
  return (
    <div className="absolute right-0 bottom-0 w-[800px] h-[81px] bg-[#7fa9d6] flex items-center overflow-hidden">
      <span className="ml-[20px] w-[290px] shrink-0 text-[54px] leading-none font-black text-[#160c80] tracking-[1px] [-webkit-text-stroke:1px_#160c80]">公式指标网</span>
      <svg width="90" height="81" viewBox="0 0 90 81" className="shrink-0 ml-[5px]">
        <path d="M7 36 A36 36 0 0 1 81 36" fill="none" stroke="#d9604c" strokeWidth="8" />
        <path d="M81 44 A36 36 0 0 1 44 79" fill="none" stroke="#e8c84a" strokeWidth="8" />
        <circle cx="44" cy="9" r="6" fill="#e8c84a" />
        <path d="M34 18 H54 V40 H60 V46 H54 V72 H44 V62 H34 V54 H40 V46 H28 V40 H34 Z" fill="#e8c84a" />
        <path d="M10 48 A36 36 0 0 0 38 76" fill="none" stroke="#f0f0f0" strokeWidth="3" strokeDasharray="2 2" />
      </svg>
      <span className="ml-[24px] shrink-0 text-[50px] leading-none font-bold text-white font-['DejaVu_Serif',serif] [-webkit-text-stroke:1px_white]">www.9m8.cn</span>
    </div>
  )
}

export default function App() {
  return (
    <div className="relative w-[2160px] h-[1395px] bg-black overflow-hidden flex flex-col font-['Liberation_Sans','Noto_Sans_CJK_SC',sans-serif]">
      <TitleBar />
      <div className="flex-1 flex min-h-0">
        <div className="w-[1787px] shrink-0 flex flex-col">
          <ToolRow />
          <InfoRow />
          <MainChart />
          <div className="h-[2px] bg-[#a00000] shrink-0" />
          <IndicatorTitle />
          <IndicatorChart />
          <TimeAxis />
          <TabRows />
        </div>
        <QuotePanel />
        <SideBar />
      </div>
      <StatusBar />
      <Watermark />
    </div>
  )
}
